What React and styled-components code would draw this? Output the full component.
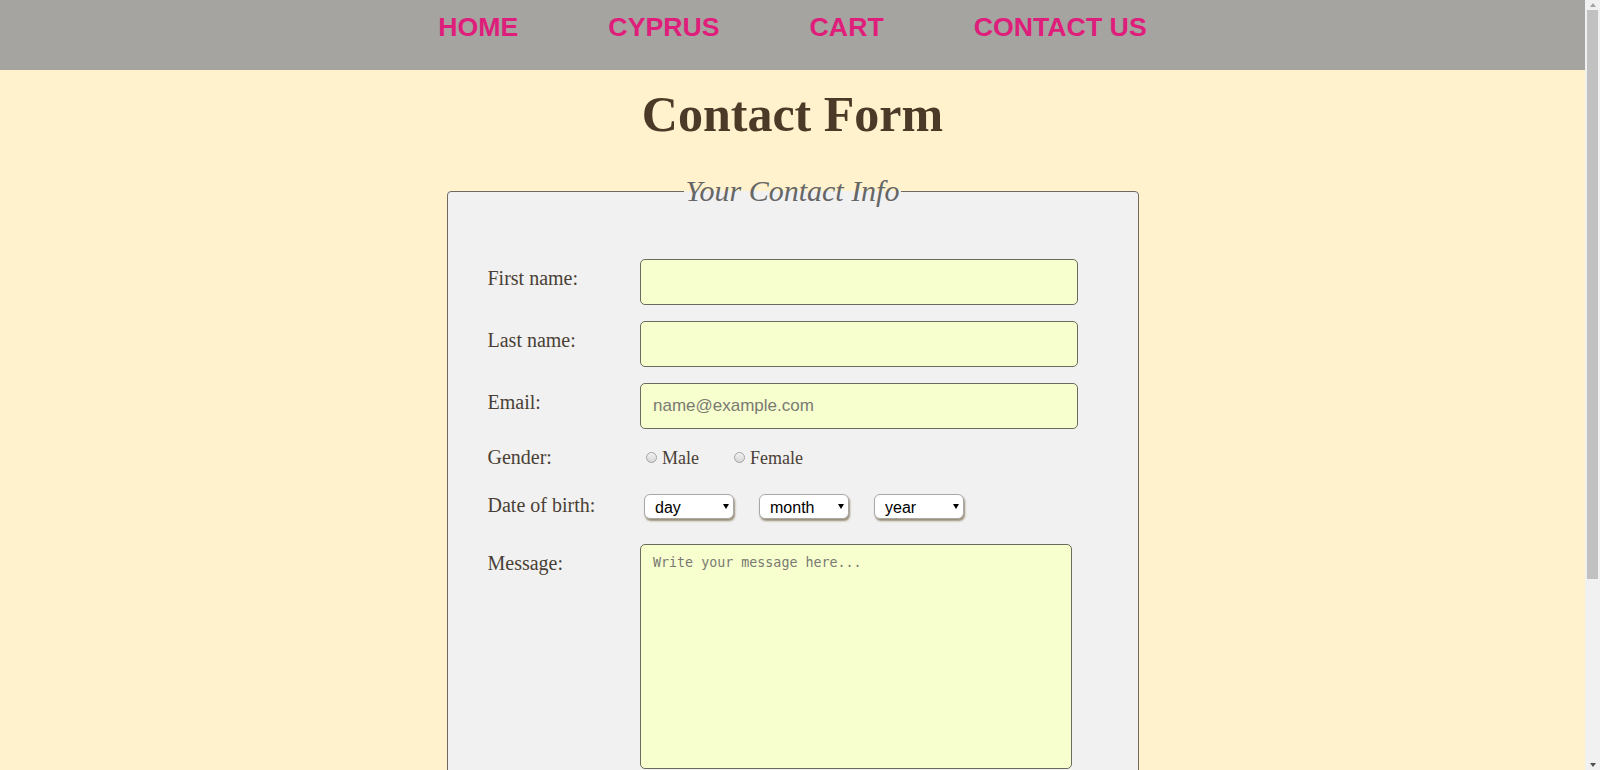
import React from "react";
import styled, { createGlobalStyle } from "styled-components";

const Global = createGlobalStyle`
  html, body { margin: 0; padding: 0; overflow: hidden; }
  body {
    background: #fff2cc;
    font-family: "Liberation Serif", "Times New Roman", serif;
  }
`;

const Viewport = styled.div`
  display: flex;
  height: 100vh;
  background: #fff2cc;
`;

const Content = styled.main`
  flex: 1;
  min-width: 0;
  overflow-y: auto;
  scrollbar-width: none;
  &::-webkit-scrollbar { display: none; }
`;

/* drawn page scrollbar, as in the screenshot */
const ScrollBar = styled.div`
  flex: none;
  width: 15px;
  display: flex;
  flex-direction: column;
  background: #f1f1f1;
`;

const ScrollArrow = styled.div`
  flex: none;
  height: 10px;
  display: flex;
  align-items: center;
  justify-content: center;
  &::before {
    content: "";
    border-left: 3.5px solid transparent;
    border-right: 3.5px solid transparent;
    ${(p) =>
      p.$down
        ? "border-top: 4px solid #505050;"
        : "border-bottom: 4px solid #a3a3a3;"}
  }
`;

const Track = styled.div`
  flex: 1;
  padding: 0 2px;
`;

const Thumb = styled.div`
  height: 569px;
  background: #c1c1c1;
`;

const Header = styled.header`
  height: 70px;
  box-sizing: border-box;
  padding-top: 12px;
  background: #a5a4a0;
`;

const Nav = styled.nav`
  display: flex;
  justify-content: center;
  gap: 90px;
`;

const NavLink = styled.a`
  font-family: "Liberation Sans", Arial, sans-serif;
  font-weight: bold;
  font-size: 26.7px;
  line-height: 30px;
  color: #df1d7b;
  text-decoration: none;
`;

const Title = styled.h1`
  margin: 15px 0 31px;
  text-align: center;
  font-size: 50px;
  font-weight: bold;
  line-height: normal;
  color: #4b3a28;
`;

const Fieldset = styled.fieldset`
  width: 692px;
  min-width: 0;
  box-sizing: border-box;
  margin: 0 auto 120px;
  padding: 51px 40px 60px;
  background: #f1f1f1;
  border: 1px solid #6d6a60;
  border-radius: 4px;
`;

const Legend = styled.legend`
  margin: 0 auto;
  padding: 0 2px;
  font-style: italic;
  font-size: 30px;
  line-height: normal;
  color: #666666;
`;

const Row = styled.div`
  display: flex;
  align-items: flex-start;
  margin-bottom: ${(p) => (p.$mb !== undefined ? p.$mb : 16)}px;
`;

const Label = styled.label`
  flex: none;
  width: 152.5px;
  padding-top: ${(p) => (p.$pt !== undefined ? p.$pt : 8)}px;
  font-size: 20px;
  line-height: 22px;
  color: #4a3f36;
`;

const TextInput = styled.input`
  width: 438px;
  height: 46px;
  box-sizing: border-box;
  margin: 0;
  padding: 0 12px;
  border: 1px solid #6b6a5c;
  border-radius: 5px;
  background: #f7ffce;
  font-family: "Liberation Sans", Arial, sans-serif;
  font-size: 17px;
  color: #333;
  outline: none;
  &::placeholder { color: #7a7a72; }
`;

const Options = styled.div`
  display: flex;
  gap: 29px;
  padding-top: 2px;
`;

const Option = styled.label`
  display: flex;
  align-items: flex-start;
  font-size: 18px;
  line-height: 22px;
  color: #4a3f36;
`;

const Radio = styled.input`
  appearance: none;
  -webkit-appearance: none;
  flex: none;
  width: 11px;
  height: 11px;
  box-sizing: border-box;
  margin: 5px 5px 0 6px;
  border: 1px solid #a4a4a4;
  border-radius: 50%;
  background: linear-gradient(#f2f2f2, #d6d6d6);
`;

const Selects = styled.div`
  display: flex;
  gap: 25px;
  padding-left: 4px;
`;

const SelectWrap = styled.div`
  position: relative;
  width: 90px;
  height: 25px;
  &::after {
    content: "";
    position: absolute;
    right: 5px;
    top: 10px;
    border-left: 3px solid transparent;
    border-right: 3px solid transparent;
    border-top: 5px solid #000;
    pointer-events: none;
  }
`;

const Select = styled.select`
  appearance: none;
  -webkit-appearance: none;
  width: 90px;
  height: 25px;
  box-sizing: border-box;
  margin: 0;
  padding: 2px 0 0 10px;
  border: 1px solid #a8a8a8;
  border-radius: 6px;
  background: #ffffff;
  box-shadow: 1px 2px 2px rgba(95, 75, 35, 0.6);
  font-family: "Liberation Sans", Arial, sans-serif;
  font-size: 16px;
  color: #000;
  outline: none;
`;

const TextArea = styled.textarea`
  width: 432px;
  height: 225px;
  box-sizing: border-box;
  margin: 0;
  padding: 10px 12px;
  border: 1px solid #6b6a5c;
  border-radius: 5px;
  background: #f7ffce;
  font-family: "DejaVu Sans Mono", monospace;
  font-size: 13.33px;
  color: #333;
  resize: none;
  outline: none;
  &::placeholder { color: #7a7a72; }
`;

const days = Array.from({ length: 31 }, (_, i) => i + 1);
const months = ["January", "February", "March", "April", "May", "June", "July", "August", "September", "October", "November", "December"];
const years = Array.from({ length: 80 }, (_, i) => 2017 - i);

export default function App() {
  return (
    <Viewport>
      <Global />
      <Content>
        <Header>
          <Nav>
            <NavLink href="#">HOME</NavLink>
            <NavLink href="#">CYPRUS</NavLink>
            <NavLink href="#">CART</NavLink>
            <NavLink href="#">CONTACT US</NavLink>
          </Nav>
        </Header>
        <Title>Contact Form</Title>
        <form onSubmit={(e) => e.preventDefault()}>
          <Fieldset>
            <Legend>Your Contact Info</Legend>
            <Row>
              <Label htmlFor="fname">First name:</Label>
              <TextInput id="fname" type="text" />
            </Row>
            <Row>
              <Label htmlFor="lname">Last name:</Label>
              <TextInput id="lname" type="text" />
            </Row>
            <Row>
              <Label htmlFor="email">Email:</Label>
              <TextInput id="email" type="email" placeholder="name@example.com" />
            </Row>
            <Row $mb={25}>
              <Label $pt={1}>Gender:</Label>
              <Options>
                <Option>
                  <Radio type="radio" name="gender" value="male" />
                  Male
                </Option>
                <Option>
                  <Radio type="radio" name="gender" value="female" />
                  Female
                </Option>
              </Options>
            </Row>
            <Row $mb={25}>
              <Label $pt={0}>Date of birth:</Label>
              <Selects>
                <SelectWrap>
                  <Select defaultValue="">
                    <option value="">day</option>
                    {days.map((d) => <option key={d}>{d}</option>)}
                  </Select>
                </SelectWrap>
                <SelectWrap>
                  <Select defaultValue="">
                    <option value="">month</option>
                    {months.map((m) => <option key={m}>{m}</option>)}
                  </Select>
                </SelectWrap>
                <SelectWrap>
                  <Select defaultValue="">
                    <option value="">year</option>
                    {years.map((y) => <option key={y}>{y}</option>)}
                  </Select>
                </SelectWrap>
              </Selects>
            </Row>
            <Row $mb={0}>
              <Label htmlFor="msg">Message:</Label>
              <TextArea id="msg" placeholder="Write your message here..." />
            </Row>
          </Fieldset>
        </form>
      </Content>
      <ScrollBar aria-hidden="true">
        <ScrollArrow />
        <Track>
          <Thumb />
        </Track>
        <ScrollArrow $down />
      </ScrollBar>
    </Viewport>
  );
}
